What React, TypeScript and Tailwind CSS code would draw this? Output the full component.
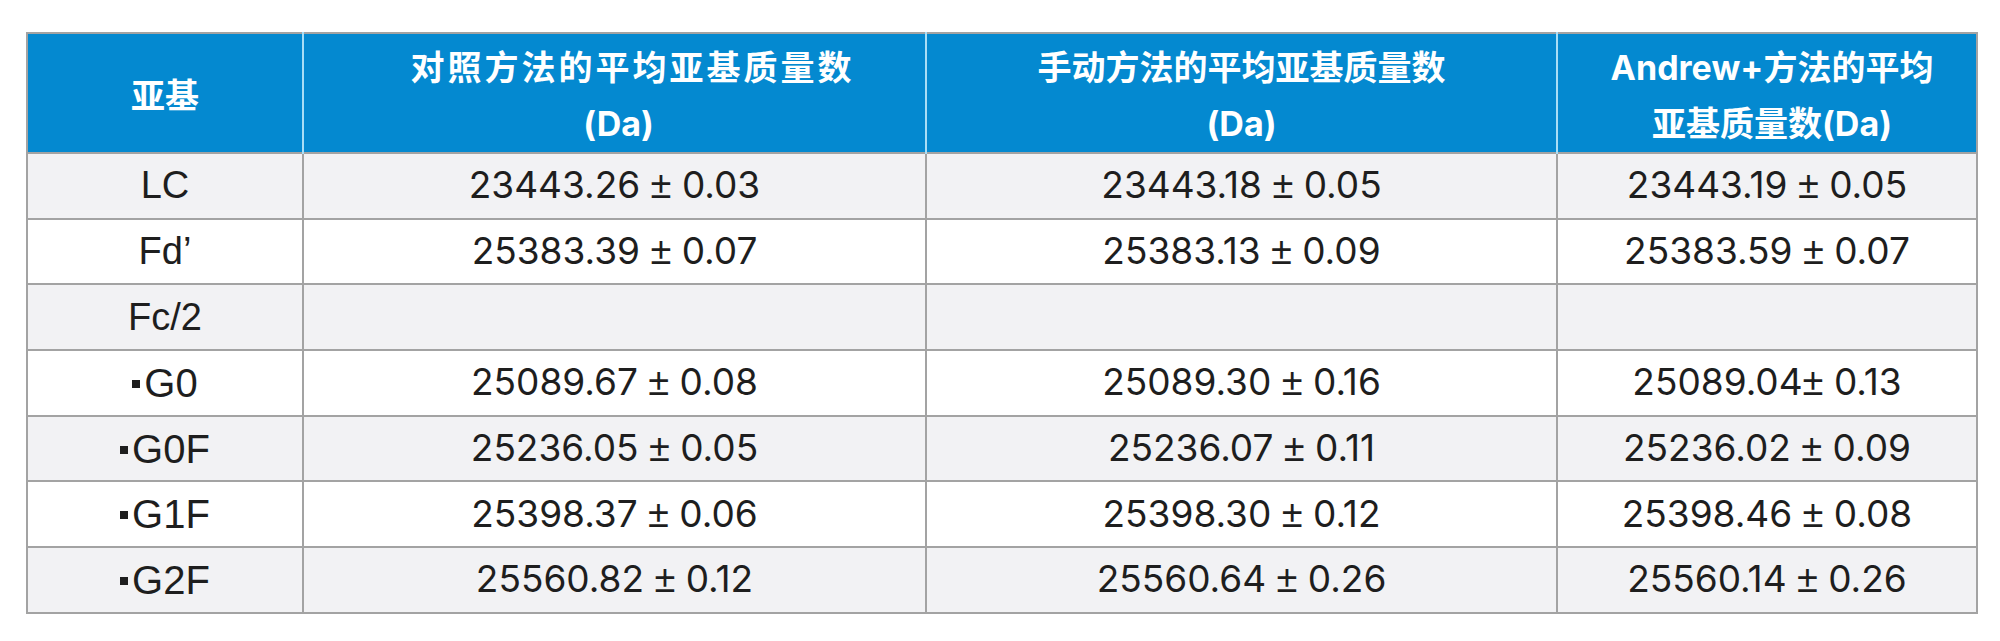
const rows: { name: string; bullet?: boolean; vals: string[] }[] = [
  { name: "LC", vals: ["23443.26 ± 0.03", "23443.18 ± 0.05", "23443.19 ± 0.05"] },
  { name: "Fd’", vals: ["25383.39 ± 0.07", "25383.13 ± 0.09", "25383.59 ± 0.07"] },
  { name: "Fc/2", vals: ["", "", ""] },
  { name: "G0", bullet: true, vals: ["25089.67 ± 0.08", "25089.30 ± 0.16", "25089.04± 0.13"] },
  { name: "G0F", bullet: true, vals: ["25236.05 ± 0.05", "25236.07 ± 0.11", "25236.02 ± 0.09"] },
  { name: "G1F", bullet: true, vals: ["25398.37 ± 0.06", "25398.30 ± 0.12", "25398.46 ± 0.08"] },
  { name: "G2F", bullet: true, vals: ["25560.82 ± 0.12", "25560.64 ± 0.26", "25560.14 ± 0.26"] },
]

const headFont = "font-['Inter','Noto_Sans_CJK_SC',sans-serif]"

// split the value so the ± sign can use a taller glyph
function Value({ v }: { v: string }) {
  const i = v.indexOf("±")
  if (i < 0) return <>{v}</>
  return (
    <>
      {v.slice(0, i)}
      <span className="font-['Liberation_Sans',sans-serif] text-[38px]">±</span>
      {v.slice(i + 1)}
    </>
  )
}

export default function App() {
  return (
    <div className="w-[2000px] h-[641px] bg-white pt-[32px] pl-[26px]">
      <table className="border-collapse table-fixed w-[1950px] border-2 border-[#a3a3a3]">
        <colgroup>
          <col className="w-[276px]" />
          <col className="w-[623px]" />
          <col className="w-[631px]" />
          <col className="w-[420px]" />
        </colgroup>
        <thead>
          <tr className={`h-[120px] bg-[#0489d0] text-white font-bold text-[34px] leading-[56px] ${headFont}`}>
            <th className="border-r-2 border-[#a9def6] pt-[6px]">亚基</th>
            <th className="border-r-2 border-[#a9def6] pt-[6px]">
              <span className="block pl-[36px] tracking-[3px]">对照方法的平均亚基质量数</span>
              <span className="block pl-[8px]">(Da)</span>
            </th>
            <th className="border-r-2 border-[#a9def6] pt-[6px]">
              手动方法的平均亚基质量数
              <br />
              (Da)
            </th>
            <th className="pt-[6px] pl-[10px]">
              Andrew+方法的平均
              <br />
              亚基质量数(Da)
            </th>
          </tr>
        </thead>
        <tbody className="text-[#1e1e1e]">
          {rows.map((r, i) => (
            <tr key={r.name} className={`h-[65.7px] ${i % 2 === 0 ? "bg-[#f2f2f4]" : "bg-white"}`}>
              <td
                className={`border-2 border-[#a3a3a3] text-center font-['Liberation_Sans',sans-serif] ${
                  r.bullet ? "text-[40px]" : "text-[38px]"
                }`}
              >
                {r.bullet && <span className="inline-block w-[8px] h-[8px] bg-[#1e1e1e] mr-[4px] align-[9px]" />}
                {r.name}
              </td>
              {r.vals.map((v, j) => (
                <td key={j} className="border-2 border-[#a3a3a3] text-center text-[37px] font-['Inter',sans-serif]">
                  <Value v={v} />
                </td>
              ))}
            </tr>
          ))}
        </tbody>
      </table>
    </div>
  )
}
